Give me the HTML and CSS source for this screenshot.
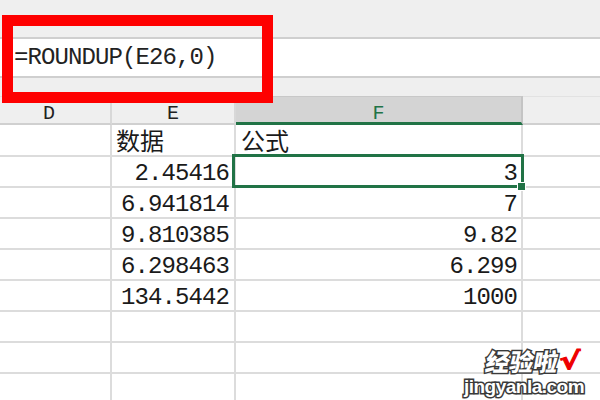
FILE: index.html
```html
<!DOCTYPE html>
<html>
<head>
<meta charset="utf-8">
<link rel="stylesheet" href="styles.css">
</head>
<body>
<div class="app">
  <div class="ribbon"></div>
  <div class="fbar"><span class="formula">=ROUNDUP(E26,0)</span></div>
  <div class="band"></div>
  <div class="sheet">
    <div class="hd">D</div><div class="hd">E</div><div class="hd hd-sel">F</div><div class="hd hd-last"></div>

    <div class="c r1"></div><div class="c r1 txt">数据</div><div class="c r1 txt f">公式</div><div class="c r1 last"></div>

    <div class="c"></div><div class="c num">2.45416</div><div class="c num f sel">3</div><div class="c last"></div>
    <div class="c"></div><div class="c num">6.941814</div><div class="c num f">7</div><div class="c last"></div>
    <div class="c"></div><div class="c num">9.810385</div><div class="c num f">9.82</div><div class="c last"></div>
    <div class="c"></div><div class="c num">6.298463</div><div class="c num f">6.299</div><div class="c last"></div>
    <div class="c"></div><div class="c num">134.5442</div><div class="c num f">1000</div><div class="c last"></div>
    <div class="c"></div><div class="c"></div><div class="c"></div><div class="c last"></div>
    <div class="c"></div><div class="c"></div><div class="c"></div><div class="c last"></div>
    <div class="c"></div><div class="c"></div><div class="c"></div><div class="c last"></div>
  </div>
  <div class="callout"></div>
  <div class="watermark">
    <div class="wm-top"><span class="wm-cn">经验啦</span><span class="wm-check">√</span></div>
    <div class="wm-url">jingyanla.com</div>
  </div>
</div>
</body>
</html>
```

FILE: styles.css
```css
html, body {
  margin: 0;
  padding: 0;
}
body {
  width: 600px;
  height: 400px;
  overflow: hidden;
  background: #ffffff;
  font-family: "Liberation Mono", "Noto Sans CJK SC", monospace;
  color: #1a1a1a;
}
.app {
  position: relative;
  width: 600px;
  height: 400px;
  overflow: hidden;
}
.ribbon {
  height: 37px;
  background: #efefef;
  border-bottom: 2px solid #cfcfcf;
}
.fbar {
  height: 37px;
  background: #ffffff;
  border-bottom: 2px solid #cfcfcf;
  display: flex;
  align-items: center;
  padding-left: 14px;
}
.formula {
  font-size: 24px;
  letter-spacing: -0.9px;
  color: #222;
}
.band {
  height: 18px;
  background: #efefef;
}
.sheet {
  margin-left: -12px;
  width: 612px;
  display: grid;
  grid-template-columns: 124px 124px 287px 77px;
  grid-template-rows: 29px 32px repeat(8, 31px);
}
.hd {
  background: #efefef;
  border-right: 2px solid #d8d8d8;
  border-bottom: 2px solid #d0d0d0;
  border-top: 1px solid #e2e2e2;
  box-sizing: border-box;
  display: flex;
  justify-content: center;
  align-items: center;
  padding-top: 7px;
  font-size: 20px;
  color: #222;
}
.hd-sel {
  background: #d4d4d4;
  color: #217346;
  border-top: 1px solid #c8c8c8;
  border-bottom: 3px solid #217346;
  border-right: 2px solid #c4c4c4;
}
.hd-last {
  border-right: none;
}
.c {
  border-right: 2px solid #dcdcdc;
  border-bottom: 2px solid #dcdcdc;
  box-sizing: border-box;
  display: flex;
  align-items: center;
  position: relative;
}
.c.last {
  border-right: none;
}
.txt {
  font-family: "Noto Sans CJK SC", sans-serif;
  font-size: 24px;
  padding-left: 4px;
  padding-bottom: 1px;
  color: #1a1a1a;
}
.txt.f {
  padding-left: 5px;
}
.num {
  justify-content: flex-end;
  padding-right: 5px;
  padding-top: 3px;
  font-size: 24px;
  letter-spacing: -0.9px;
}
.num.f {
  padding-right: 4px;
}
.sel {
  z-index: 2;
}
.sel::after {
  content: "";
  position: absolute;
  top: -3px;
  left: -4px;
  right: -3px;
  bottom: -2px;
  border: 3px solid #217346;
}
.sel::before {
  content: "";
  position: absolute;
  right: -5px;
  bottom: -5px;
  width: 7px;
  height: 7px;
  background: #217346;
  border: 1px solid #ffffff;
  z-index: 3;
}
.callout {
  position: absolute;
  left: 2px;
  top: 15px;
  width: 249px;
  height: 66px;
  border: 11px solid #fe0000;
}
.watermark {
  position: absolute;
  left: 458px;
  top: 347px;
  width: 132px;
  display: flex;
  flex-direction: column;
  align-items: center;
}
.wm-top {
  display: flex;
  align-items: center;
  gap: 4px;
  padding-left: 16px;
  height: 27px;
}
.wm-cn {
  font-family: "Noto Sans CJK SC", sans-serif;
  font-weight: 900;
  font-size: 24px;
  line-height: 27px;
  color: #ffffff;
  -webkit-text-stroke: 3px #3a3a3a;
  paint-order: stroke fill;
  transform: skewX(-10deg);
}
.wm-check {
  font-family: "DejaVu Sans", sans-serif;
  font-weight: bold;
  font-size: 24px;
  line-height: 24px;
  color: #ee0000;
  -webkit-text-stroke: 1px #ee0000;
  transform: scaleX(1.3);
}
.wm-url {
  font-family: "Liberation Sans", Arial, sans-serif;
  font-weight: bold;
  font-size: 19px;
  line-height: 22px;
  margin-top: 2px;
  color: #ffffff;
  -webkit-text-stroke: 3px #3a3a3a;
  paint-order: stroke fill;
  letter-spacing: -0.5px;
}
```
